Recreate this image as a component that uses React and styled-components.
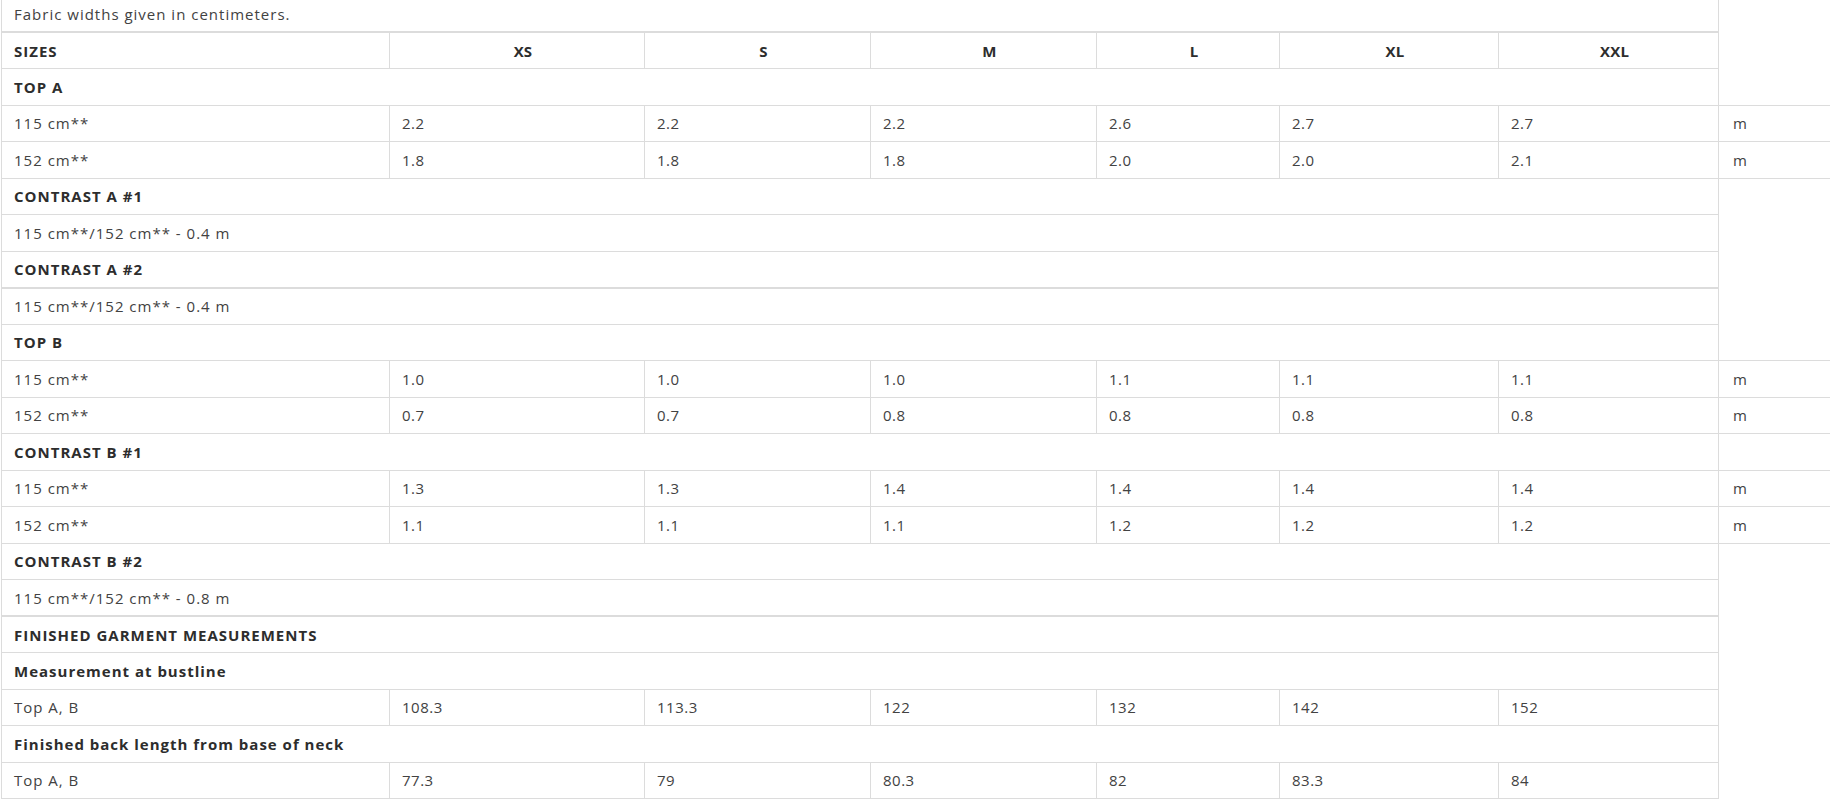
import React from "react";
import styled, { createGlobalStyle } from "styled-components";

const GlobalStyle = createGlobalStyle`
  html, body {
    margin: 0;
    padding: 0;
    background: #fff;
    overflow: hidden;
  }
  body {
    font-family: "Open Sans", "Liberation Sans", sans-serif;
    color: #444;
  }
`;

const Page = styled.div`
  padding-left: 1px;
  margin-top: -5px;
`;

const Table = styled.table`
  border-collapse: collapse;
  table-layout: fixed;
  width: 1829px;
`;

const Row = styled.tr`
  height: 36.5px;

  & > td {
    border-top-width: ${(p) => (p.$thick ? "2px" : "1px")};
  }
`;

const Cell = styled.td`
  border: 1px solid #dcdcdc;
  padding: 0 0 0 12px;
  font-size: 15px;
  letter-spacing: ${(p) => (p.$bold ? "1px" : "1px")};
  color: ${(p) => (p.$bold ? "#2d2d2d" : "#424242")};
  font-weight: ${(p) => (p.$bold ? 700 : 400)};
  text-align: left;
  vertical-align: middle;
  white-space: nowrap;
`;

const ValueCell = styled(Cell)`
  letter-spacing: 0.5px;
`;

const SizeHead = styled(Cell)`
  text-align: center;
  letter-spacing: 0.2px;
  font-weight: 700;
  color: #2d2d2d;
`;

const UnitCell = styled(Cell)`
  border-right: none;
  padding-left: 14px;
`;

const sizes = ["XS", "S", "M", "L", "XL", "XXL"];

const sections = [
  { type: "title", text: "TOP A" },
  { type: "data", label: "115 cm**", values: ["2.2", "2.2", "2.2", "2.6", "2.7", "2.7"], unit: "m" },
  { type: "data", label: "152 cm**", values: ["1.8", "1.8", "1.8", "2.0", "2.0", "2.1"], unit: "m" },
  { type: "title", text: "CONTRAST A #1" },
  { type: "note", text: "115 cm**/152 cm** - 0.4 m" },
  { type: "title", text: "CONTRAST A #2" },
  { type: "note", text: "115 cm**/152 cm** - 0.4 m", thick: true },
  { type: "title", text: "TOP B" },
  { type: "data", label: "115 cm**", values: ["1.0", "1.0", "1.0", "1.1", "1.1", "1.1"], unit: "m" },
  { type: "data", label: "152 cm**", values: ["0.7", "0.7", "0.8", "0.8", "0.8", "0.8"], unit: "m" },
  { type: "title", text: "CONTRAST B #1" },
  { type: "data", label: "115 cm**", values: ["1.3", "1.3", "1.4", "1.4", "1.4", "1.4"], unit: "m" },
  { type: "data", label: "152 cm**", values: ["1.1", "1.1", "1.1", "1.2", "1.2", "1.2"], unit: "m" },
  { type: "title", text: "CONTRAST B #2" },
  { type: "note", text: "115 cm**/152 cm** - 0.8 m" },
  { type: "title", text: "FINISHED GARMENT MEASUREMENTS", thick: true },
  { type: "title", text: "Measurement at bustline" },
  { type: "data", label: "Top A, B", values: ["108.3", "113.3", "122", "132", "142", "152"] },
  { type: "title", text: "Finished back length from base of neck" },
  { type: "data", label: "Top A, B", values: ["77.3", "79", "80.3", "82", "83.3", "84"] },
];

const widths = [388, 255, 226, 226, 183, 219, 220, 112];

export default function App() {
  return (
    <>
      <GlobalStyle />
      <Page>
        <Table>
          <colgroup>
            {widths.map((w, i) => (
              <col key={i} style={{ width: w }} />
            ))}
          </colgroup>
          <tbody>
            <Row>
              <Cell colSpan={7}>Fabric widths given in centimeters.</Cell>
            </Row>
            <Row $thick>
              <Cell $bold>SIZES</Cell>
              {sizes.map((s) => (
                <SizeHead key={s}>{s}</SizeHead>
              ))}
            </Row>
            {sections.map((row, i) => {
              if (row.type === "title") {
                return (
                  <Row key={i} $thick={row.thick}>
                    <Cell $bold colSpan={7}>
                      {row.text}
                    </Cell>
                  </Row>
                );
              }
              if (row.type === "note") {
                return (
                  <Row key={i} $thick={row.thick}>
                    <Cell colSpan={7}>{row.text}</Cell>
                  </Row>
                );
              }
              return (
                <Row key={i}>
                  <Cell>{row.label}</Cell>
                  {row.values.map((v, j) => (
                    <ValueCell key={j}>{v}</ValueCell>
                  ))}
                  {row.unit && <UnitCell>{row.unit}</UnitCell>}
                </Row>
              );
            })}
          </tbody>
        </Table>
      </Page>
    </>
  );
}
